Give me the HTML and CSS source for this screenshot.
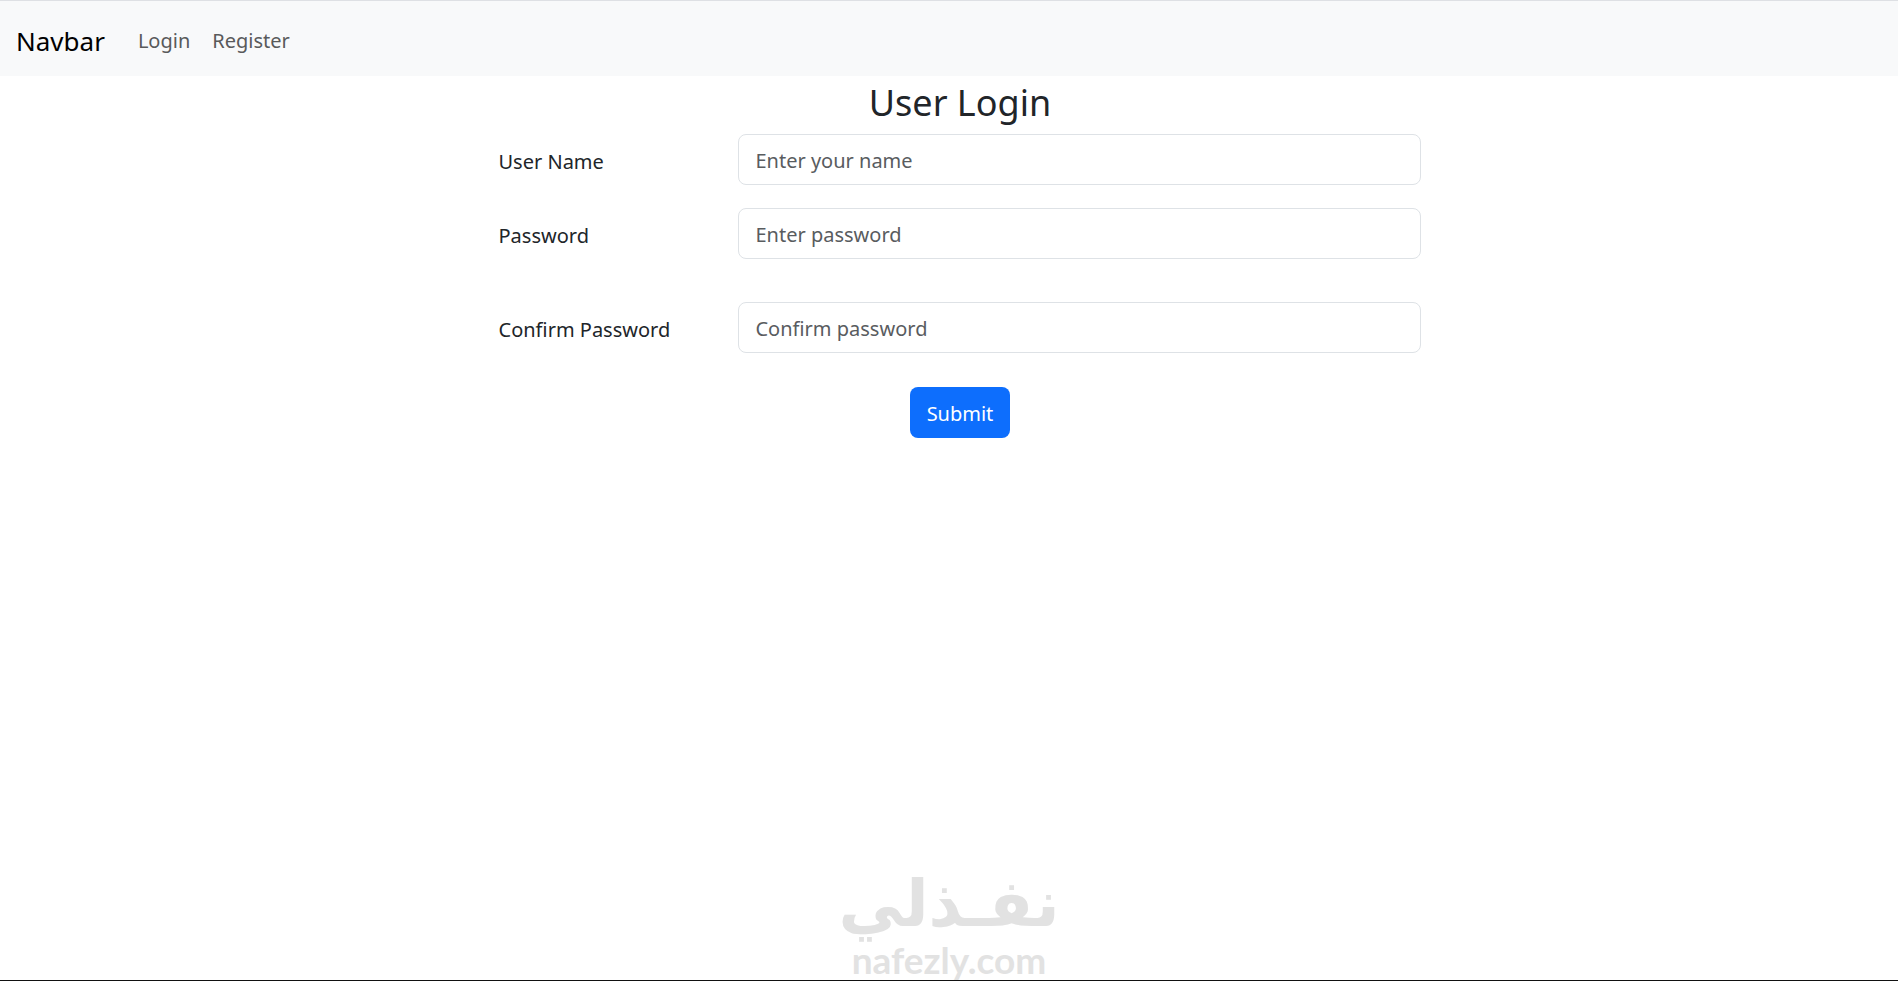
FILE: index.html
```html
<!DOCTYPE html>
<html lang="en">
<head>
    <meta charset="UTF-8">
    <meta name="viewport" content="width=device-width, initial-scale=1.0">
    <title>User Login</title>
    <link rel="stylesheet" href="styles.css">
</head>
<body>

<nav class="navbar">
    <a class="navbar-brand" href="#">Navbar</a>
    <a class="nav-link" href="#">Login</a>
    <a class="nav-link" href="#">Register</a>
</nav>

<main class="container">
    <h2>User Login</h2>
    <form>
        <div class="row">
            <label for="username">User Name</label>
            <input type="text" id="username" placeholder="Enter your name">
        </div>
        <div class="row row-password">
            <label for="password">Password</label>
            <input type="password" id="password" placeholder="Enter password">
        </div>
        <div class="row row-confirm">
            <label for="confirm">Confirm Password</label>
            <input type="password" id="confirm" placeholder="Confirm password">
        </div>
        <button type="submit" class="btn">Submit</button>
    </form>
</main>

<footer class="watermark">
    <span class="watermark-name" lang="ar" dir="rtl">نفـذلي</span>
    <span class="watermark-site">nafezly.com</span>
</footer>

</body>
</html>
```

FILE: styles.css
```css
* {
    box-sizing: border-box;
}
body {
    display: flex;
    flex-direction: column;
    min-height: 100vh;
    margin: 0;
    border-top: 1px solid #dee0e4;
    border-bottom: 1px solid #111;
    background-color: #fff;
    color: #212529;
    font-family: "Noto Sans", "Open Sans", sans-serif;
    font-size: 20px;
    line-height: 32px;
}
.navbar {
    display: flex;
    align-items: center;
    height: 75px;
    padding: 4px 16px 0;
    background-color: #f8f9fa;
}
.navbar a {
    text-decoration: none;
}
.navbar-brand {
    margin-right: 22px;
    color: #000;
    font-size: 26px;
}
.nav-link {
    padding: 0 11px;
    color: #595a5b;
}
.container {
    padding: 0 25%;
}
h2 {
    margin: 0;
    padding: 5px 2px 9px 24px;
    font-size: 36px;
    font-weight: 400;
    line-height: 44px;
    text-align: center;
}
form {
    padding: 0 2px 0 24px;
}
.row {
    display: grid;
    grid-template-columns: 13fr 37fr;
    align-items: center;
}
.row-password {
    margin-top: 23px;
}
.row-confirm {
    margin-top: 43px;
}
label {
    padding-top: 4px;
}
input {
    width: 100%;
    height: 51px;
    padding: 2px 16px 0;
    border: 1px solid #dee2e6;
    border-radius: 8px;
    background-color: #fff;
    color: #212529;
    font: inherit;
}
input::placeholder {
    color: #595c5f;
    opacity: 1;
}
.btn {
    display: block;
    height: 51px;
    margin: 34px auto 0;
    padding: 2px 17px 0;
    border: none;
    border-radius: 8px;
    background-color: #0d6efd;
    color: #fff;
    font: inherit;
    cursor: pointer;
}
.watermark {
    display: flex;
    flex-direction: column;
    align-items: center;
    margin-top: auto;
    color: #e2e2e2;
    font-weight: 700;
}
.watermark-name {
    font-family: "DejaVu Sans", sans-serif;
    font-size: 65px;
    line-height: 76px;
}
.watermark-site {
    padding-bottom: 2px;
    font-family: Lato, sans-serif;
    font-size: 37px;
    line-height: 36px;
}
```
